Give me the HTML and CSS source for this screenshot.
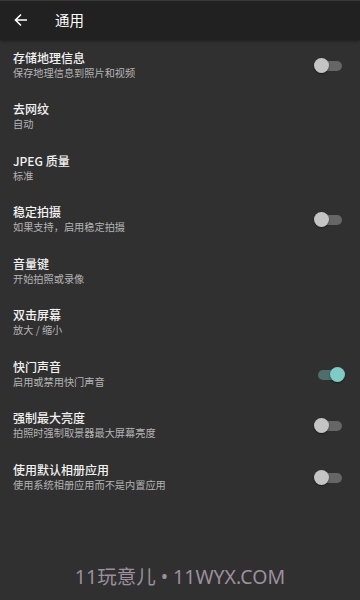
FILE: index.html
```html
<!DOCTYPE html>
<html lang="zh">
<head>
<meta charset="utf-8">
<link rel="stylesheet" href="styles.css">
</head>
<body>
<div class="screen">
  <header class="bar">
    <svg class="back" width="16" height="16" viewBox="0 0 16 16"><path d="M14 8H2.5M8 2.5L2.5 8L8 13.5" fill="none" stroke="#fff" stroke-width="1.6"/></svg>
    <div class="title">通用</div>
  </header>
  <main class="list">
    <div class="row"><div class="txt"><div class="t">存储地理信息</div><div class="s">保存地理信息到照片和视频</div></div><div class="sw"><div class="track"></div><div class="thumb"></div></div></div>
    <div class="row"><div class="txt"><div class="t">去网纹</div><div class="s">自动</div></div></div>
    <div class="row"><div class="txt"><div class="t">JPEG 质量</div><div class="s">标准</div></div></div>
    <div class="row"><div class="txt"><div class="t">稳定拍摄</div><div class="s">如果支持，启用稳定拍摄</div></div><div class="sw"><div class="track"></div><div class="thumb"></div></div></div>
    <div class="row"><div class="txt"><div class="t">音量键</div><div class="s">开始拍照或录像</div></div></div>
    <div class="row"><div class="txt"><div class="t">双击屏幕</div><div class="s">放大 / 缩小</div></div></div>
    <div class="row"><div class="txt"><div class="t">快门声音</div><div class="s">启用或禁用快门声音</div></div><div class="sw on"><div class="track"></div><div class="thumb"></div></div></div>
    <div class="row"><div class="txt"><div class="t">强制最大亮度</div><div class="s">拍照时强制取景器最大屏幕亮度</div></div><div class="sw"><div class="track"></div><div class="thumb"></div></div></div>
    <div class="row"><div class="txt"><div class="t">使用默认相册应用</div><div class="s">使用系统相册应用而不是内置应用</div></div><div class="sw"><div class="track"></div><div class="thumb"></div></div></div>
  </main>
  <footer class="mark">11玩意儿 • 11WYX.COM</footer>
</div>
</body>
</html>
```
FILE: styles.css
```css
html, body { margin: 0; padding: 0; }
body { background: #303030; font-family: "Noto Sans CJK SC", "Noto Sans", sans-serif; }
.screen { width: 360px; height: 600px; display: flex; flex-direction: column; background: #303030; overflow: hidden; }
.bar { height: 40px; flex: none; background: #212121; border-top: 1px solid #3a3a3a; box-sizing: border-box; display: flex; align-items: center; box-shadow: 0 1px 3px rgba(0,0,0,0.4); }
.back { margin-left: 13px; margin-top: -2px; }
.title { margin-left: 26px; color: #fff; font-size: 14.5px; margin-top: -3px; }
.list { display: flex; flex-direction: column; }
.row { height: 51.5px; display: flex; align-items: center; padding: 0 18px 0 13px; }
.txt { flex: 1; display: flex; flex-direction: column; margin-top: -2px; }
.t { color: #f2f2f2; font-size: 12px; font-weight: 500; line-height: 16px; }
.s { color: #b4b4b4; font-size: 10.2px; line-height: 14px; }
.sw { position: relative; width: 28px; height: 16px; }
.track { position: absolute; left: 2px; right: 0; top: 3px; height: 10px; border-radius: 5px; background: #666; }
.thumb { position: absolute; left: 0; top: 0; width: 15px; height: 15px; border-radius: 50%; background: #c4c4c4; box-shadow: 0 1px 2px rgba(0,0,0,0.4); }
.sw.on .track { background: #4d6e6b; left: 4px; right: 0; }
.sw.on .thumb { left: auto; right: -3px; background: #80cbc4; }
.mark { margin-top: auto; margin-bottom: 11px; text-align: center; color: #9d8f9e; font-size: 19.5px; line-height: 24px; font-family: "Noto Sans", "Noto Sans CJK SC", sans-serif; }
```
